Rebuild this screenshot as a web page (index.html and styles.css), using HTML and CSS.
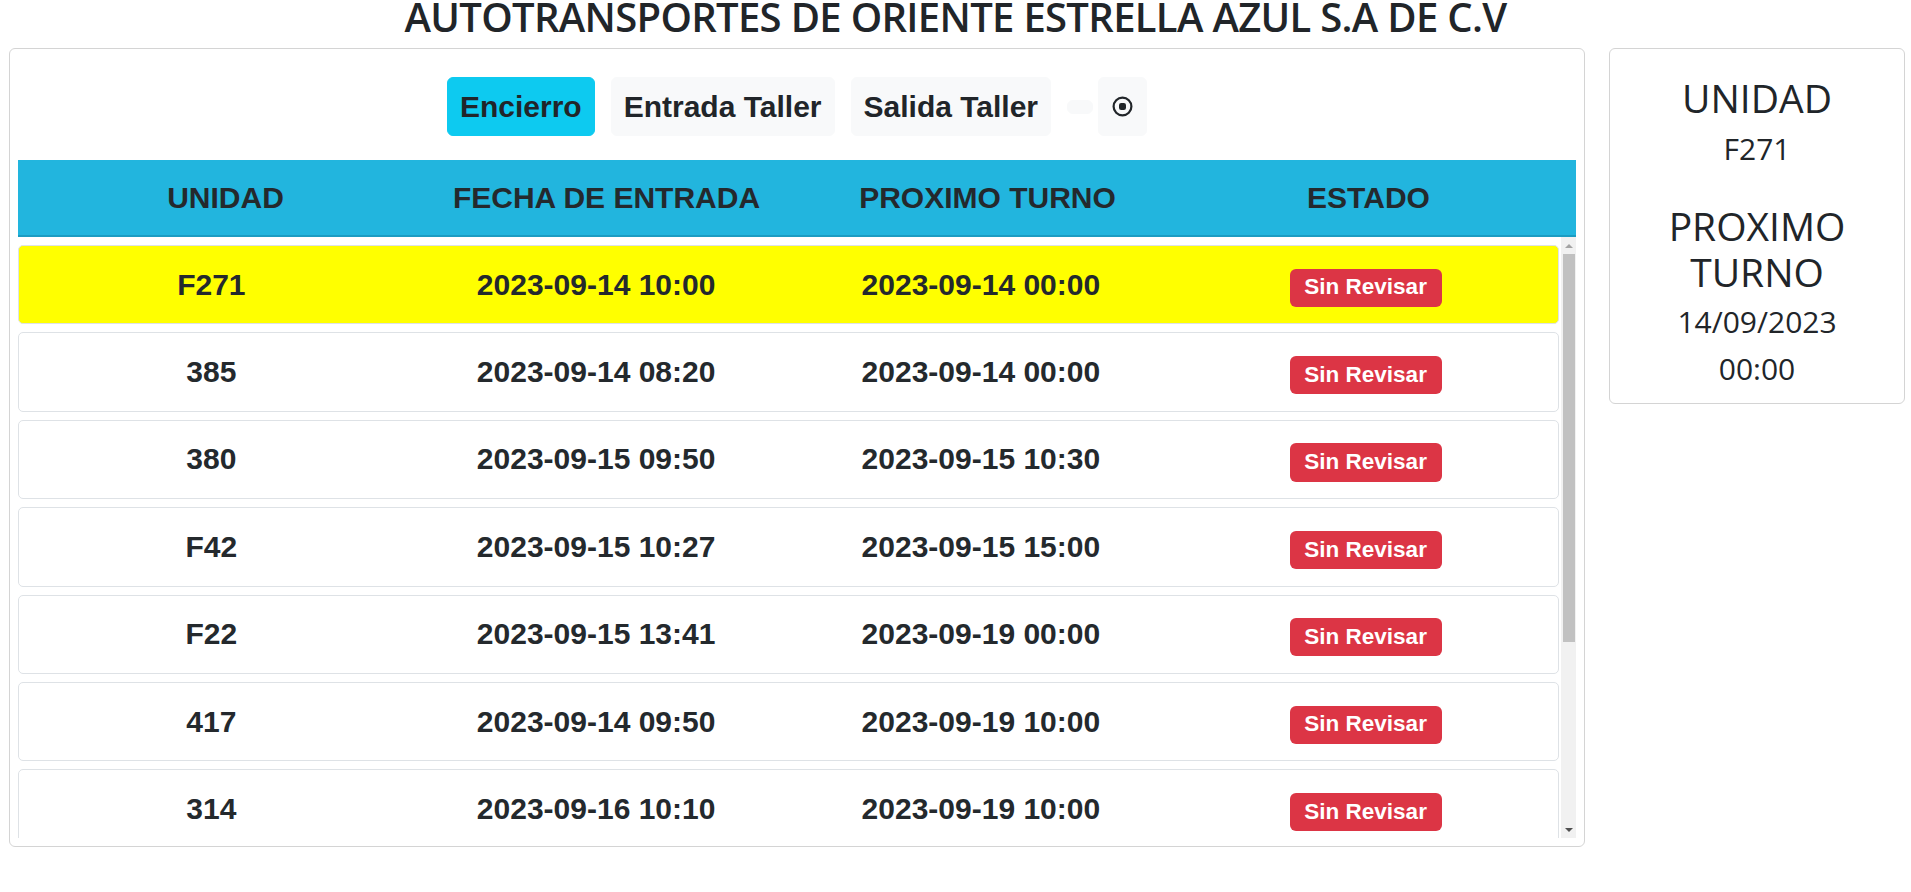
FILE: index.html
```html
<!DOCTYPE html>
<html lang="es">
<head>
<meta charset="utf-8">
<title>Encierro</title>
<link rel="stylesheet" href="styles.css">
</head>
<body>
<h1 class="title">AUTOTRANSPORTES DE ORIENTE ESTRELLA AZUL S.A DE C.V</h1>
<div class="layout">
  <section class="main-card">
    <div class="toolbar">
      <button type="button" class="btn btn-info">Encierro</button>
      <button type="button" class="btn">Entrada Taller</button>
      <button type="button" class="btn">Salida Taller</button>
      <button type="button" class="btn btn-empty"></button>
      <button type="button" class="btn btn-icon" aria-label="Grabar">
        <svg width="21" height="21" viewBox="0 0 21 21" aria-hidden="true">
          <circle cx="10.5" cy="10.5" r="8.9" fill="none" stroke="currentColor" stroke-width="2.2"/>
          <rect x="7" y="7" width="7" height="7" rx="2.2" fill="currentColor"/>
        </svg>
      </button>
    </div>
    <div class="table-head">
      <div>UNIDAD</div>
      <div>FECHA DE ENTRADA</div>
      <div>PROXIMO TURNO</div>
      <div>ESTADO</div>
    </div>
    <div class="list-wrap">
      <div class="rows">
        <div class="row current"><div>F271</div><div>2023-09-14 10:00</div><div>2023-09-14 00:00</div><div><span class="badge">Sin Revisar</span></div></div>
        <div class="row"><div>385</div><div>2023-09-14 08:20</div><div>2023-09-14 00:00</div><div><span class="badge">Sin Revisar</span></div></div>
        <div class="row"><div>380</div><div>2023-09-15 09:50</div><div>2023-09-15 10:30</div><div><span class="badge">Sin Revisar</span></div></div>
        <div class="row"><div>F42</div><div>2023-09-15 10:27</div><div>2023-09-15 15:00</div><div><span class="badge">Sin Revisar</span></div></div>
        <div class="row"><div>F22</div><div>2023-09-15 13:41</div><div>2023-09-19 00:00</div><div><span class="badge">Sin Revisar</span></div></div>
        <div class="row"><div>417</div><div>2023-09-14 09:50</div><div>2023-09-19 10:00</div><div><span class="badge">Sin Revisar</span></div></div>
        <div class="row"><div>314</div><div>2023-09-16 10:10</div><div>2023-09-19 10:00</div><div><span class="badge">Sin Revisar</span></div></div>
      </div>
      <div class="scrollbar" aria-hidden="true">
        <div class="sb-btn sb-up"></div>
        <div class="sb-track"><div class="sb-thumb" style="height: 68.4%"></div></div>
        <div class="sb-btn sb-down"></div>
      </div>
    </div>
  </section>
  <aside class="side-card">
    <h2 class="side-label">UNIDAD</h2>
    <div class="side-value">F271</div>
    <h2 class="side-label side-turn">PROXIMO TURNO</h2>
    <div class="side-date side-date-first">14/09/2023</div>
    <div class="side-date">00:00</div>
  </aside>
</div>
</body>
</html>
```
FILE: styles.css
```css
body {
  margin: 0;
  background: #ffffff;
  color: #212529;
  font-family: "Open Sans", "Noto Sans", sans-serif;
}

.title {
  margin: 0 0 14px;
  font-size: 40px;
  font-weight: 600;
  letter-spacing: -0.68px;
  line-height: 34px;
  text-align: center;
  color: #212529;
}

.layout {
  display: flex;
  align-items: flex-start;
  gap: 24px;
  padding: 0 6px 0 9px;
}

.main-card {
  flex: 0 0 1576px;
  box-sizing: border-box;
  border: 1px solid #d4d4d4;
  border-radius: 6px;
  padding: 8px;
}

.toolbar {
  display: flex;
  justify-content: center;
  align-items: center;
  gap: 16px;
  padding-top: 20px;
  margin-bottom: 24px;
}

.btn {
  box-sizing: border-box;
  height: 59px;
  margin: 0;
  padding: 6px 12px;
  border: 1px solid #f8f9fa;
  border-radius: 6px;
  background: #f8f9fa;
  color: #212529;
  font-family: "Liberation Sans", Arial, sans-serif;
  font-size: 30px;
  font-weight: 700;
  line-height: 45px;
}

.btn-info {
  background: #0dcaf0;
  border-color: #0dcaf0;
}

.btn-empty {
  width: 26px;
  height: 14px;
  padding: 0;
  margin-right: -11px;
}

.btn-icon {
  display: flex;
  align-items: center;
  justify-content: center;
  width: 49px;
  padding: 0;
}

.table-head {
  display: grid;
  grid-template-columns: repeat(4, 1fr);
  align-items: center;
  box-sizing: border-box;
  height: 77px;
  padding: 0 17px;
  background: #22b5de;
  border-bottom: 2px solid #1b9cc2;
  text-align: center;
  font-family: "Liberation Sans", Arial, sans-serif;
  font-size: 30px;
  font-weight: 700;
  color: #24292d;
}

.list-wrap {
  display: flex;
  height: 601px;
}

.rows {
  flex: 1 1 auto;
  min-width: 0;
  overflow: hidden;
  display: flex;
  flex-direction: column;
  gap: 8px;
  padding: 8px 2px 0 0;
}

.scrollbar {
  flex: 0 0 15px;
  display: flex;
  flex-direction: column;
  background: #f1f1f1;
}

.sb-btn {
  flex: 0 0 17px;
  display: flex;
  align-items: center;
  justify-content: center;
}

.sb-up::before,
.sb-down::before {
  content: "";
  width: 0;
  height: 0;
  border-left: 4px solid transparent;
  border-right: 4px solid transparent;
}

.sb-up::before {
  border-bottom: 4px solid #a3a3a3;
}

.sb-down::before {
  border-top: 4px solid #505050;
}

.sb-track {
  flex: 1 1 auto;
  padding: 0 1px 0 2px;
}

.sb-thumb {
  background: #c1c1c1;
}

.row {
  flex: 0 0 79.4px;
  display: grid;
  grid-template-columns: repeat(4, 1fr);
  align-items: center;
  box-sizing: border-box;
  border: 1px solid #dee2e6;
  border-radius: 5px;
  background: #ffffff;
  text-align: center;
  font-family: "Liberation Sans", Arial, sans-serif;
  font-size: 30px;
  font-weight: 700;
  color: #24292d;
}

.row.current {
  background: #ffff00;
}

.badge {
  display: inline-block;
  margin-top: 6px;
  padding: 7.9px 14.6px;
  border-radius: 6px;
  background: #dc3545;
  color: #ffffff;
  font-size: 22.5px;
  font-weight: 700;
  line-height: 1;
}

.side-card {
  flex: 0 0 296px;
  box-sizing: border-box;
  border: 1px solid #d4d4d4;
  border-radius: 6px;
  padding: 26px 8px 10px;
  text-align: center;
}

.side-label {
  margin: 0;
  font-size: 39px;
  font-weight: 400;
  line-height: 46.8px;
}

.side-value {
  margin-top: 9.2px;
  font-size: 30px;
  font-weight: 400;
  line-height: 36px;
}

.side-turn {
  margin-top: 35.6px;
}

.side-date {
  font-size: 30px;
  font-weight: 400;
  line-height: 47.6px;
}

.side-date-first {
  margin-top: 1.5px;
}
```
